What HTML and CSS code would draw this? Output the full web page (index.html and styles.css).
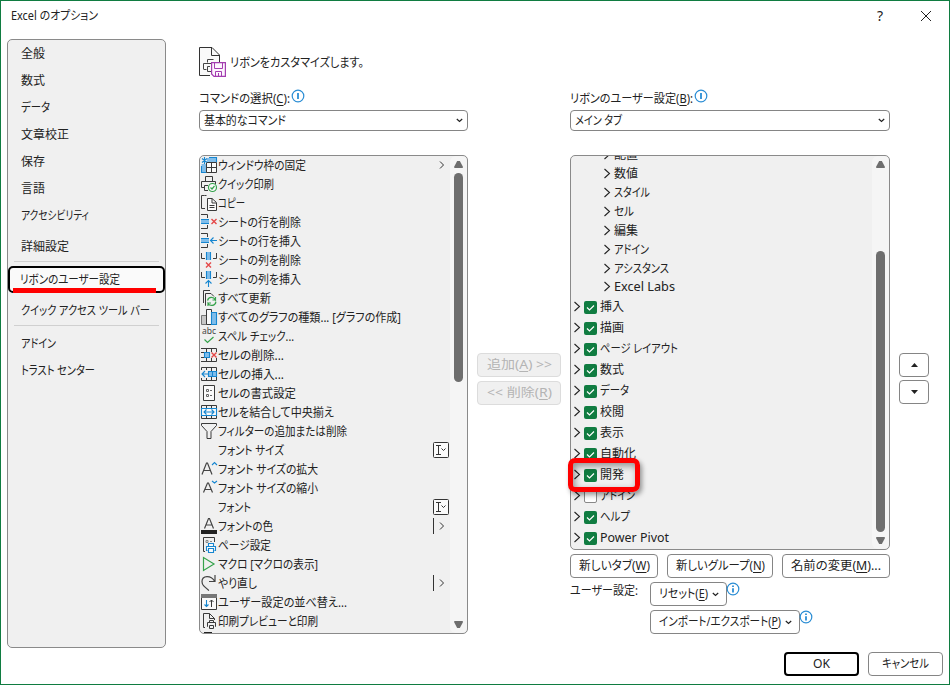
FILE: index.html
```html
<!DOCTYPE html>
<html lang="ja">
<head>
<meta charset="utf-8">
<title>Excel のオプション</title>
<link rel="stylesheet" href="styles.css">
</head>
<body>
<svg class="defs" width="0" height="0">
  <symbol id="arrow" viewBox="0 0 8 11"><path d="M1.500 1L6.500 5.500 1.500 10"/></symbol>
  <symbol id="tick" viewBox="0 0 13 13"><path d="M3 6.500l2.500 2.500L10 4.500"/></symbol>
  <symbol id="chev" viewBox="0 0 7 5"><path d="M.8 1l2.700 2.500L6.200 1"/></symbol>
  <symbol id="combo" viewBox="0 0 16 16"><rect x=".5" y=".5" width="15" height="15" rx="1" fill="#fafafa"/><path d="M3 3.500h5M5.500 3.500v9M3 12.500h5M8.500 6.500l2 2 2-2"/></symbol>
</svg>
<div class="dialog">
<header class="titlebar">
  <span class="title" data-w="87">Excel のオプション</span>
  <span class="help">?</span>
  <svg class="close" width="12" height="12" viewBox="0 0 12 12"><path d="M1 1l10 10M11 1L1 11"/></svg>
</header>
<div class="body">
<nav class="sidebar">
  <a data-w="24">全般</a><a data-w="24">数式</a><a data-w="29">データ</a><a data-w="48">文章校正</a><a data-w="24">保存</a><a data-w="24">言語</a><a data-w="68">アクセシビリティ</a>
  <a class="detail" data-w="48">詳細設定</a>
  <hr>
  <div class="selected"><a data-w="100">リボンのユーザー設定</a><i></i></div>
  <a class="quick" data-w="129">クイック アクセス ツール バー</a>
  <hr class="second">
  <a data-w="35">アドイン</a><a data-w="74">トラスト センター</a>
</nav>
<main>
<div class="heading">
  <svg width="28" height="31" viewBox="0 0 28 31" fill="none"><path d="M11 28.500H.5V.5H13L20.500 8V15" fill="#f9f9f9" stroke="#333"/><path d="M12.500.5V8.500H20.500" stroke="#333"/><path d="M8.500 15.500V12.500H14.500M4.500 22V16.500H12M7.500 22.500H4.500M11 19.500H8.500V24.500H12" stroke="#444"/><path d="M12.600 15.600H26.400V29.400H15L12.600 27z" fill="#fdf5fe" stroke="#a33db0" stroke-width="1.200"/><path d="M15.500 16V21.500H23.500V16M16.500 29V24.500H22.500V29M19.500 26V29" stroke="#a33db0"/></svg>
  <span data-w="134">リボンをカスタマイズします。</span>
</div>
<div class="columns">
<section class="left">
  <div class="label"><span data-w="91">コマンドの選択(<u>C</u>):</span><svg class="info" viewBox="0 0 14 14"><circle cx="7" cy="7" r="5.800"/><path d="M7 4v6"/></svg></div>
  <div class="select"><span data-w="82">基本的なコマンド</span><svg width="7" height="5"><use href="#chev"/></svg></div>
  <div class="listbox commands">
  <div class="rows">
    <div class="row"><svg viewBox="0 0 16 16"><path class="f" d="M5 5h10.500v10.500H5z"/><path class="b" d="M6 1h9.500v4H6zM.5 7h5v8.500h-5z"/><path class="s" d="M8 .5h7.500v5M.5 9v6.500h5"/><path class="k" d="M5.500 5.500h10v10h-10zM10.500 5.500v10M5.500 10.500h10"/><path class="s" d="M1 1.500l5 4M6 1.500l-5 4M3.500 0v7"/></svg><span data-w="88">ウィンドウ枠の固定</span><svg class="more" viewBox="0 0 16 16"><path d="M7 4.500L10.500 8 7 11.500"/></svg></div>
    <div class="row"><svg viewBox="0 0 16 16"><path class="k" d="M4.500 5V.5h7V5M3 11.500H.5v-6h14V8M7 9.500H3.500v5H7"/><circle class="g f" cx="11.500" cy="11.500" r="4"/><path class="g" d="M9.500 11.500l1.500 1.500 2.500-3"/></svg><span data-w="56">クイック印刷</span></div>
    <div class="row"><svg viewBox="0 0 16 16"><path class="k" d="M4 13.500H.5V.5h3l2-0"/><path class="k f" d="M6.500 3.500H11l4.500 4v8h-9z"/><path class="k" d="M11 3.500V8h4M8.500 10.500h5M8.500 12.500h5"/></svg><span data-w="27">コピー</span></div>
    <div class="row"><svg viewBox="0 0 16 16"><path class="k" d="M0 .5h6.500V4M0 14.500h6.500V11"/><path class="b" d="M0 5.500h8v4H0z"/><path class="s" d="M0 5.500h8M0 9.500h8"/><path class="r" d="M10.500 5l5 5M15.500 5l-5 5"/></svg><span data-w="83">シートの行を削除</span></div>
    <div class="row"><svg viewBox="0 0 16 16"><path class="k" d="M0 .5h6.500V4M0 14.500h6.500V11"/><path class="b" d="M0 5.500h8v4H0z"/><path class="s" d="M0 5.500h8M0 9.500h8M16 7.500h-6M12.500 4.500l-3 3 3 3"/></svg><span data-w="83">シートの行を挿入</span></div>
    <div class="row"><svg viewBox="0 0 16 16"><path class="k" d="M.5 1v5.500H4M15.500 1v5.500H12"/><path class="b" d="M5.500 0h4v8h-4z"/><path class="s" d="M5.500 0v8M9.500 0v8"/><path class="r" d="M5 10.500l5 5M10 10.500l-5 5"/></svg><span data-w="83">シートの列を削除</span></div>
    <div class="row"><svg viewBox="0 0 16 16"><path class="k" d="M.5 1v5.500H4M15.500 1v5.500H12"/><path class="b" d="M5.500 0h4v8h-4z"/><path class="s" d="M5.500 0v8M9.500 0v8M7.500 16v-6M4.500 12.500l3-3 3 3"/></svg><span data-w="83">シートの列を挿入</span></div>
    <div class="row"><svg viewBox="0 0 16 16"><path class="k" d="M2.500 13V.5H9M5 15.500h-.5v-12H10l3 3"/><path class="g" d="M6.500 10.500c1-4 6-4 8-.5V7M15 12c-1 4-6 4.500-8 1.500V16M14.500 10h-3M7 13h3"/></svg><span data-w="53">すべて更新</span></div>
    <div class="row"><svg viewBox="0 0 16 16"><path d="M.5 6.500h5v9h-5z" fill="#c8c8c8" stroke="#777"/><path class="k f" d="M5.500.5h5v15h-5z"/><path class="b bs" d="M10.500 3.500h5v12h-5z"/></svg><span data-w="183">すべてのグラフの種類... [グラフの作成]</span></div>
    <div class="row"><svg viewBox="0 0 16 16"><text x="1" y="6" font-size="8.500" textLength="14">abc</text><path class="g" d="M3.500 11.500l3 3 6-5.500"/></svg><span data-w="76">スペル チェック...</span></div>
    <div class="row"><svg viewBox="0 0 16 16"><path class="k" d="M0 1.500h15.500V5M0 14.500h15.500V11M5.500 2v3M5.500 11v3M10.500 2v3M10.500 11v3M0 5.500h3M0 10.500h3"/><path class="b bs" d="M3.500 5.500h5v5h-5z"/><path class="r" d="M10.500 5.500l5 5M15.500 5.500l-5 5"/></svg><span data-w="66">セルの削除...</span></div>
    <div class="row"><svg viewBox="0 0 16 16"><path class="k" d="M.5 4V1.500h15V5M.5 12v2.500h15V11M5.500 1v3M10.500 1v4M5.500 12v2M10.500 11v3"/><path class="b bs" d="M7.500 5.500h8v5h-8z"/><path class="s" d="M11.500 5.500v5M8 8H1M4 5L1 8l3 3"/></svg><span data-w="66">セルの挿入...</span></div>
    <div class="row"><svg viewBox="0 0 16 16"><path class="k f" d="M2.500.5h11v15h-11z"/><path d="M5.500 4.500h2v2h-2zM5.500 9.500h2v2h-2zM9 5.500h2M9 10.500h2" stroke="#666"/></svg><span data-w="78">セルの書式設定</span></div>
    <div class="row"><svg viewBox="0 0 16 16"><path class="k" d="M.5 4V1.500h15V4M.5 12v2.500h15V12M5.500 1v3M10.500 1v3M5.500 12v3M10.500 12v3"/><path class="s f" d="M.5 4.500h15v7H.5z"/><path class="s" d="M3 8h10M5.500 5.500L3 8l2.500 2.500M10.500 5.500L13 8l-2.500 2.500"/></svg><span data-w="116">セルを結合して中央揃え</span></div>
    <div class="row"><svg viewBox="0 0 16 16"><path class="k" d="M.5.5h15v2l-5.500 6v7H6v-7l-5.500-6z"/></svg><span data-w="129">フィルターの追加または削除</span></div>
    <div class="row"><svg viewBox="0 0 16 16"></svg><span data-w="66">フォント サイズ</span><svg class="more"><use href="#combo"/></svg></div>
    <div class="row"><svg viewBox="0 0 16 16"><path class="d" d="M1 13.500L5.500 2h1L11 13.500M2.800 9.500h6.500"/><path class="s" d="M11 4l2.500-2.500L16 4"/></svg><span data-w="100">フォント サイズの拡大</span></div>
    <div class="row"><svg viewBox="0 0 16 16"><path class="d" d="M2.500 12.500l4-9.500h1l4 9.500M4 9.500h6"/><path class="s" d="M11 1l2.500 2L16 1"/></svg><span data-w="100">フォント サイズの縮小</span></div>
    <div class="row"><svg viewBox="0 0 16 16"></svg><span data-w="33">フォント</span><svg class="more"><use href="#combo"/></svg></div>
    <div class="row"><svg viewBox="0 0 16 16"><path class="d" d="M3.500 10.500L7.500.5h1l4 10M5 7h6"/><path d="M0 12h16v4H0z" fill="#222"/></svg><span data-w="55">フォントの色</span><svg class="more" viewBox="0 0 16 16"><path d="M.5 0v16M7 4.500L10.500 8 7 11.500"/></svg></div>
    <div class="row"><svg viewBox="0 0 16 16"><path class="k" d="M4 14.500H2.500V.5h11V5"/><path d="M5 3.500h2v2H5zM9 4.500h2" stroke="#888"/><path class="s f" d="M7.500 9V6.500h5V9M6.500 13.500h-1V9.500h9v4h-1M7.500 11.500h5v4h-5z"/></svg><span data-w="53">ページ設定</span></div>
    <div class="row"><svg viewBox="0 0 16 16"><path class="g" d="M2.500 1.500v13L13 8z"/></svg><span data-w="100">マクロ [マクロの表示]</span></div>
    <div class="row"><svg viewBox="0 0 16 16"><path class="d" d="M14 0v6.500H8M13.500 6C10 0 1 0 1 6.500 1 10 3 11.500 8 15.500"/></svg><span data-w="39">やり直し</span><svg class="more" viewBox="0 0 16 16"><path d="M.5 0v16M7 4.500L10.500 8 7 11.500"/></svg></div>
    <div class="row"><svg viewBox="0 0 16 16"><path class="k f" d="M.5.5h15v15H.5z"/><path d="M0 0h16v4H0z" fill="#777"/><path class="s" d="M5.500 6v7M3.500 10.500l2 2 2-2"/><path class="k" d="M10.500 13V6M8.500 8l2-2 2 2"/></svg><span data-w="129">ユーザー設定の並べ替え...</span></div>
    <div class="row"><svg viewBox="0 0 16 16"><path class="k" d="M4 14.500H2.500V.5h6l5 5V7M8.500.5v5h5M8.500 9.500v-2h4v2M7 13.500h-.5v-4h8v4H14M8.500 12.500h4v3h-4z"/></svg><span data-w="100">印刷プレビューと印刷</span></div>
    <div class="row"><svg viewBox="0 0 16 16"><path d="M3 1h8" stroke="#222" stroke-width="2"/></svg></div>
  </div>
  <div class="scrollbar"><b class="up"></b><i></i><b class="down"></b></div>
  </div>
</section>
<div class="transfer"><button><span data-w="65">追加(<u>A</u>) &gt;&gt;</span></button><button><span data-w="65">&lt;&lt; 削除(<u>R</u>)</span></button></div>
<section class="right">
  <div class="label"><span data-w="123">リボンのユーザー設定(<u>B</u>):</span><svg class="info" viewBox="0 0 14 14"><circle cx="7" cy="7" r="5.800"/><path d="M7 4v6"/></svg></div>
  <div class="select"><span data-w="47">メイン タブ</span><svg width="7" height="5"><use href="#chev"/></svg></div>
  <div class="listbox tabs">
  <div class="tree">
    <div class="group"><svg><use href="#arrow"/></svg><span data-w="24">配置</span></div>
    <div class="group"><svg><use href="#arrow"/></svg><span data-w="24">数値</span></div>
    <div class="group"><svg><use href="#arrow"/></svg><span data-w="36">スタイル</span></div>
    <div class="group"><svg><use href="#arrow"/></svg><span data-w="20">セル</span></div>
    <div class="group"><svg><use href="#arrow"/></svg><span data-w="24">編集</span></div>
    <div class="group"><svg><use href="#arrow"/></svg><span data-w="35">アドイン</span></div>
    <div class="group"><svg><use href="#arrow"/></svg><span data-w="55">アシスタンス</span></div>
    <div class="group last"><svg><use href="#arrow"/></svg><span data-w="61">Excel Labs</span></div>
    <div class="tab"><svg><use href="#arrow"/></svg><svg class="check"><use href="#tick"/></svg><span data-w="24">挿入</span></div>
    <div class="tab"><svg><use href="#arrow"/></svg><svg class="check"><use href="#tick"/></svg><span data-w="24">描画</span></div>
    <div class="tab"><svg><use href="#arrow"/></svg><svg class="check"><use href="#tick"/></svg><span data-w="78">ページ レイアウト</span></div>
    <div class="tab"><svg><use href="#arrow"/></svg><svg class="check"><use href="#tick"/></svg><span data-w="24">数式</span></div>
    <div class="tab"><svg><use href="#arrow"/></svg><svg class="check"><use href="#tick"/></svg><span data-w="29">データ</span></div>
    <div class="tab"><svg><use href="#arrow"/></svg><svg class="check"><use href="#tick"/></svg><span data-w="24">校閲</span></div>
    <div class="tab"><svg><use href="#arrow"/></svg><svg class="check"><use href="#tick"/></svg><span data-w="24">表示</span></div>
    <div class="tab"><svg><use href="#arrow"/></svg><svg class="check"><use href="#tick"/></svg><span data-w="36">自動化</span></div>
    <div class="tab"><svg><use href="#arrow"/></svg><svg class="check"><use href="#tick"/></svg><span data-w="24">開発</span></div>
    <div class="tab"><svg><use href="#arrow"/></svg><svg class="check off"></svg><span data-w="35">アドイン</span></div>
    <div class="tab"><svg><use href="#arrow"/></svg><svg class="check"><use href="#tick"/></svg><span data-w="30">ヘルプ</span></div>
    <div class="tab"><svg><use href="#arrow"/></svg><svg class="check"><use href="#tick"/></svg><span data-w="69">Power Pivot</span></div>
  </div>
  <div class="scrollbar"><b class="up"></b><i></i><b class="down"></b></div>
  </div>
  <div class="highlight"></div>
  <div class="actions"><button class="newtab"><span data-w="71">新しいタブ(<u>W</u>)</span></button><button class="newgroup"><span data-w="89">新しいグループ(<u>N</u>)</span></button><button class="rename"><span data-w="90">名前の変更(<u>M</u>)...</span></button></div>
  <div class="custom">
    <span data-w="68">ユーザー設定:</span>
    <div class="stack">
      <div><button class="reset"><span data-w="49">リセット(<u>E</u>)</span><svg width="7" height="5"><use href="#chev"/></svg></button><svg class="info" viewBox="0 0 14 14"><circle cx="7" cy="7" r="5.800"/><path d="M7 3.500v1.500M7 6.200v4.300"/></svg></div>
      <div><button class="import"><span data-w="122">インポート/エクスポート(<u>P</u>)</span><svg width="7" height="5"><use href="#chev"/></svg></button><svg class="info" viewBox="0 0 14 14"><circle cx="7" cy="7" r="5.800"/><path d="M7 3.500v1.500M7 6.200v4.300"/></svg></div>
    </div>
  </div>
</section>
<div class="order"><button><svg width="7" height="4" viewBox="0 0 7 4"><path d="M0 4L3.500 0 7 4z"/></svg></button><button><svg width="7" height="4" viewBox="0 0 7 4"><path d="M0 0l3.500 4L7 0z"/></svg></button></div>
</div>
<footer><button class="ok"><span data-w="17">OK</span></button><button><span data-w="47">キャンセル</span></button></footer>
</main>
</div>
</div>
<script src="fit.js"></script>
</body>
</html>
```
FILE: styles.css
```css
* { box-sizing: border-box; }
body { margin: 0; font: 12px/18px "Noto Sans", "Noto Sans CJK JP", sans-serif; font-feature-settings: "palt"; color: #222; }
.defs { position: absolute; }
.dialog { width: 950px; height: 685px; border: 1px solid #107c41; background: #fff; overflow: hidden; }
[data-w] { display: inline-block; white-space: nowrap; transform-origin: 0 50%; flex: none; }
svg { display: block; flex: none; fill: none; }
u { text-underline-offset: 2px; }
button { font: inherit; color: inherit; height: 24px; padding: 0; border: 1px solid #858585; border-radius: 4px; background: #fff; display: flex; align-items: center; justify-content: center; font-feature-settings: "palt"; }

.titlebar { display: flex; align-items: center; height: 29px; padding: 0 17px 0 10px; }
.help { margin-left: auto; margin-right: 37px; font-size: 14px; }
.close { stroke: #222; margin-top: 1px; }

.body { display: flex; }
.sidebar { width: 159px; height: 609px; margin: 9px 0 0 6px; border: 1px solid #8a8a8a; border-radius: 5px; background: #f0f0f0; display: flex; flex-direction: column; align-items: flex-start; }
.sidebar a { height: 27px; line-height: 27px; margin-left: 13px; }
.sidebar .detail { margin-top: 3px; line-height: 29px; }
.sidebar hr { width: 145px; height: 1px; border: 0; margin: 2px 0 4px 6px; background: #d0d0d0; flex: none; }
.selected { width: 157px; height: 27px; border: 2px solid #000; border-radius: 5px; background: #fafafa; position: relative; flex: none; }
.selected a { line-height: 24px; height: 22px; margin-left: 10px; }
.selected i { position: absolute; left: 3px; top: 20px; width: 143px; height: 5px; background: #f00; }
.sidebar .quick { margin-top: 5px; line-height: 26px; }
.sidebar .second { margin: 0 0 4px 6px; }

main { margin-left: 33px; width: 744px; }
.heading { display: flex; align-items: flex-start; height: 44px; margin-top: 17px; }
.heading span { margin-left: 3px; line-height: 31px; }
.columns { display: flex; align-items: flex-start; height: 547px; }
.left { width: 269px; }
.right { width: 320px; margin-left: 9px; position: relative; }
.label { display: flex; height: 19px; line-height: 16px; }
.label .info { margin-left: 1px; margin-top: -2px; }
.info { width: 14px; height: 14px; stroke: #2a8dd4; stroke-width: 1.2; }
.info path { stroke-width: 1.8; }
.select { height: 21px; border: 1px solid #858585; border-radius: 4px; display: flex; align-items: center; justify-content: space-between; padding: 0 4px; background: #fff; }
.select svg, .reset svg, .import svg { stroke: #222; stroke-width: 1.2; }
.listbox { display: flex; justify-content: space-between; margin-top: 24px; border: 1px solid #8a8a8a; border-radius: 5px; background: #f0f0f0; overflow: hidden; }
.commands { height: 479px; }
.rows { width: 251px; }
.row { display: flex; align-items: center; height: 19px; padding-left: 1px; }
.row svg { width: 16px; height: 16px; margin-bottom: 1px; overflow: visible; stroke-width: 1; }
.row span { margin-left: 1px; }
.row .more { margin-left: auto; margin-right: 1px; stroke: #333; }
.row svg text { fill: #444; }
.row svg .k { stroke: #3a3a3a; }
.row svg .d { stroke: #444; stroke-width: 1.2; }
.row svg .s, .row svg .bs { stroke: #1686d0; stroke-width: 1.1; }
.row svg .b { fill: #80bdea; }
.row svg .g { stroke: #35a24b; stroke-width: 1.2; }
.row svg .r { stroke: #e54848; stroke-width: 1.4; }
.row svg .f { fill: #fafafa; }
.scrollbar { width: 17px; background: #f5f5f5; border-radius: 6px; display: flex; flex-direction: column; align-items: center; padding: 5px 0; }
.scrollbar b { width: 9px; height: 7px; background: #6e6e6e; }
.up { clip-path: polygon(35% 0, 65% 0, 100% 85%, 95% 100%, 5% 100%, 0 85%); }
.down { clip-path: polygon(5% 0, 95% 0, 100% 15%, 65% 100%, 35% 100%, 0 15%); margin-top: auto; }
.scrollbar i { width: 9px; border-radius: 5px; background: #6e6e6e; }
.commands i { height: 209px; margin-top: 5px; }
.tabs { height: 395px; }
.tabs i { height: 281px; margin-top: 83px; }

.transfer { width: 84px; margin: 262px 0 0 9px; display: flex; flex-direction: column; gap: 4px; }
.transfer button { background: #f0f0f0; border-color: #dcdcdc; color: #b4b4b4; }
.tree { margin-top: -11px; }
.group, .tab { display: flex; align-items: center; }
.group { height: 19px; padding-left: 32px; }
.group.last { height: 18px; }
.group.last span { line-height: 20px; }
.tab { height: 21px; padding-left: 2px; }
.group svg, .tab svg { width: 8px; height: 11px; margin-bottom: 1px; stroke: #222; stroke-width: 1.1; }
.group span { margin-left: 3px; }
.tab .check { width: 13px; height: 13px; margin: 1px 3px 0 3px; background: #107c41; border-radius: 2px; stroke: #fff; stroke-width: 1.2; }
.tab .off { background: #fff; border: 1px solid #888; }
.highlight { position: absolute; left: -2px; top: 367px; width: 72px; height: 34px; border: 5px solid #f00; border-radius: 7px; box-shadow: 2px 3px 5px #0006, inset 2px 3px 7px #0006; }
.actions { display: flex; justify-content: space-between; margin-top: 4px; }
.newtab { width: 88px; }
.newgroup { width: 106px; }
.rename { width: 108px; }
.custom { display: flex; margin-top: 4px; }
.stack { margin-left: 12px; display: flex; flex-direction: column; gap: 4px; }
.stack > div { display: flex; }
.stack .info { margin-left: -1px; }
.reset { width: 77px; gap: 4px; }
.import { width: 150px; gap: 4px; }
.order { margin: 262px 0 0 9px; display: flex; flex-direction: column; gap: 3px; }
.order button { width: 30px; }
.order svg { fill: #222; }
footer { display: flex; justify-content: flex-end; gap: 9px; margin-top: 14px; }
footer button { width: 75px; }
.ok { border: 2px solid #000; }
```
FILE: fit.js
```js
document.querySelectorAll('[data-w]').forEach(function (el) {
  var natural = el.getBoundingClientRect().width;
  var target = Number(el.dataset.w);
  var margin = parseFloat(getComputedStyle(el).marginRight) || 0;
  el.style.transform = 'scaleX(' + target / natural + ')';
  el.style.marginRight = margin + target - natural + 'px';
});
```
